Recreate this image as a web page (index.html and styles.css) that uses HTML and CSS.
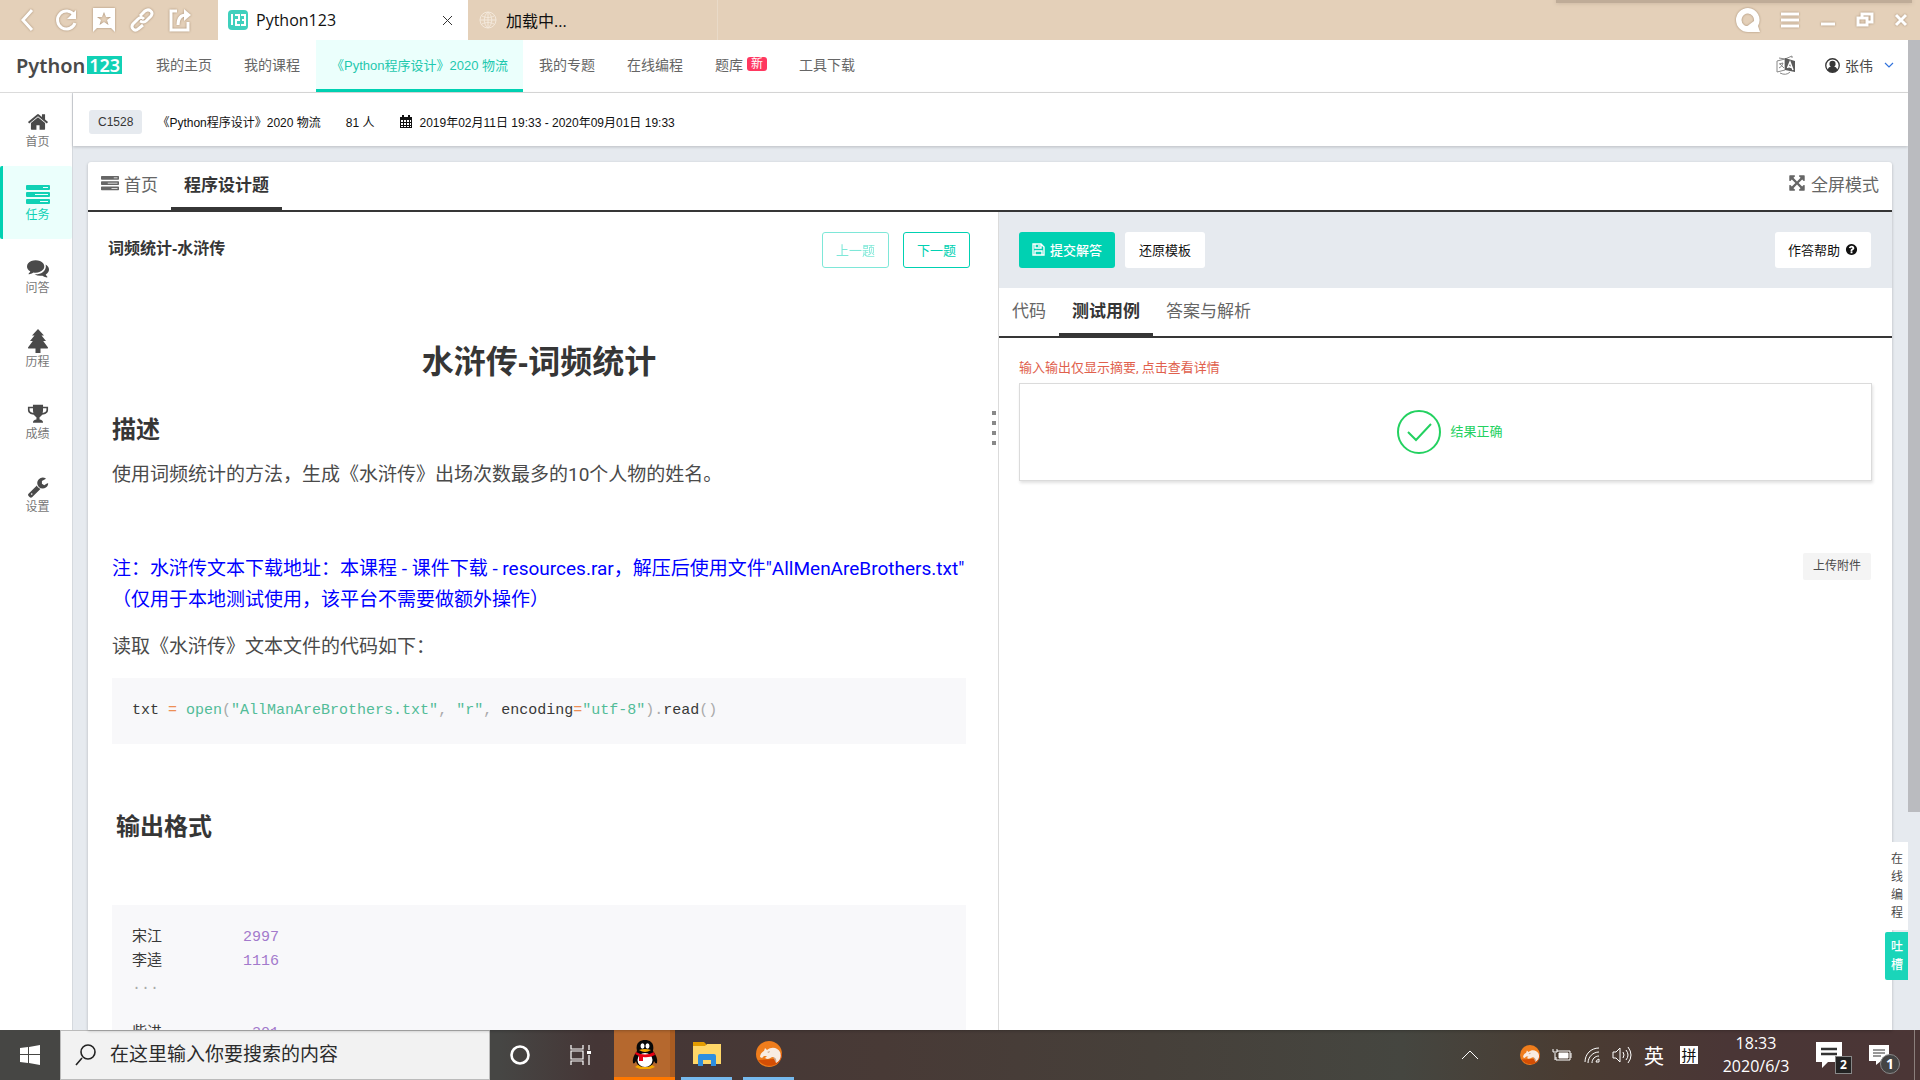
FILE: index.html
```
<!DOCTYPE html>
<html lang="zh-CN">
<head>
  <meta charset="UTF-8">
  <meta name="viewport" content="width=device-width, initial-scale=1.0">
  <title>Python123</title>
  <link rel="stylesheet" href="styles.css">
</head>
<body>
  <svg class="sprite" aria-hidden="true">
    <symbol id="home" viewBox="0 0 1792 1792"><path d="M1472 992v480q0 26-19 45t-45 19h-384v-384h-256v384h-384q-26 0-45-19t-19-45v-480q0-1 .5-3t.5-3l575-474 575 474q1 2 1 6zm223-69l-62 74q-8 9-21 11h-3q-13 0-21-7l-692-577-692 577q-12 8-24 7-13-2-21-11l-62-74q-8-10-7-23.5t11-21.5l719-599q32-26 76-26t76 26l244 204v-195q0-14 9-23t23-9h192q14 0 23 9t9 23v408l219 182q10 8 11 21.5t-7 23.5z"/></symbol>
    <symbol id="tasks" viewBox="0 0 24 20"><path fill-rule="evenodd" d="M1 0h22q1 0 1 1v3q0 1-1 1H1q-1 0-1-1V1q0-1 1-1zm16 2v1h5V2zM1 7h22q1 0 1 1v3q0 1-1 1H1q-1 0-1-1V8q0-1 1-1zm8 2v1h13V9zM1 14h22q1 0 1 1v3q0 1-1 1H1q-1 0-1-1v-3q0-1 1-1zm13 2v1h8v-1z"/></symbol>
    <symbol id="comments" viewBox="0 0 1792 1792"><path d="M1408 768q0 139-94 257t-256.5 186.5-353.5 68.5q-86 0-176-16-124 88-278 128-36 9-86 16h-3q-11 0-20.5-8t-11.5-21q-1-3-1-6.5t.5-6.5 2-6l2.5-5 3.5-5.5 4-5 4.5-5 4-4.5q5-6 23-25t26-29.5 22.5-29 25-38.5 20.5-44q-124-72-195-177t-71-224q0-139 94-257t256.5-186.5 353.5-68.5 353.5 68.5 256.5 186.5 94 257zm384 256q0 120-71 224.5t-195 176.5q10 24 20.5 44t25 38.5 22.5 29 26 29.5 23 25q1 1 4 4.5t4.5 5 4 5 3.5 5.5l2.5 5 2 6 .5 6.5-1 6.5q-3 14-13 22t-22 7q-50-7-86-16-154-40-278-128-90 16-176 16-271 0-472-132 58 4 88 4 161 0 309-45t264-129q125-92 192-212t67-254q0-77-23-152 129 71 204 178t75 230z"/></symbol>
    <symbol id="tree" viewBox="0 0 24 24"><path d="M12 0l6 6.500h-2.500l4.500 5.500h-2.800L22 18.500q.4 1-.8 1h-6.700V24h-5v-4.500H2.800q-1.200 0-.8-1L6.800 12H4l4.500-5.500H6z"/></symbol>
    <symbol id="trophy" viewBox="0 0 24 24"><path fill-rule="evenodd" d="M6.500 2h11v2H23v3.500c0 3-3 5-6.500 5.200-.8 1.400-2 2.200-2.800 2.800v2.500c2.300.2 3.800 1.200 3.800 3.500H6.500c0-2.300 1.500-3.300 3.800-3.500v-2.500c-.8-.6-2-1.400-2.800-2.800C4 12.500 1 10.500 1 7.500V4h5.500zm0 3.800H2.800v1.700c0 1.500 1.900 2.900 4.100 3.300-.4-1.300-.4-3-.4-5zm11 0c0 2 0 3.700-.4 5 2.200-.4 4.100-1.800 4.100-3.300V5.800z"/></symbol>
    <symbol id="wrench" viewBox="0 0 1792 1792"><path d="M448 1472q0-26-19-45t-45-19-45 19-19 45 19 45 45 19 45-19 19-45zm644-420l-682 682q-37 37-90 37-52 0-91-37l-106-108q-38-36-38-90 0-53 38-91l681-681q39 98 114.500 173.500t173.500 114.500zm634-435q0 39-23 106-47 134-164.500 217.500t-258.500 83.500q-185 0-316.500-131.500t-131.500-316.500 131.500-316.500 316.500-131.500q58 0 121.500 16.500t107.500 46.500q16 11 16 28t-16 28l-293 169v224l193 107q5-3 79-48.500t135.500-81 70.500-35.500q15 0 23.500 10t8.500 25z"/></symbol>
    <symbol id="expand" viewBox="0 0 1792 1792"><path d="M1411 541l-355 355 355 355 144-144q29-31 70-14 39 17 39 59v448q0 26-19 45t-45 19h-448q-42 0-59-40-17-39 14-69l144-144-355-355-355 355 144 144q31 30 14 69-17 40-59 40h-448q-26 0-45-19t-19-45v-448q0-42 40-59 39-17 69 14l144 144 355-355-355-355-144 144q-19 19-45 19-12 0-24-5-40-17-40-59v-448q0-26 19-45t45-19h448q42 0 59 40 17 39-14 69l-144 144 355 355 355-355-144-144q-31-30-14-69 17-40 59-40h448q26 0 45 19t19 45v448q0 42-39 59-13 5-25 5-26 0-45-19z"/></symbol>
    <symbol id="question" viewBox="0 0 1792 1792"><path d="M1024 1376v-192q0-14-9-23t-23-9h-192q-14 0-23 9t-9 23v192q0 14 9 23t23 9h192q14 0 23-9t9-23zm256-672q0-88-55.500-163t-138.500-116-170-41q-243 0-371 213-15 24 8 42l132 100q7 6 19 6 16 0 25-12 53-68 86-92 34-24 86-24 48 0 85.500 26t37.500 59q0 38-20 61t-68 45q-63 28-115.500 86.500t-52.500 125.500v36q0 14 9 23t23 9h192q14 0 23-9t9-23q0-19 21.500-49.500t54.500-49.500q32-18 49-28.500t46-35 44.500-48 28-60.500 12.500-81zm384 192q0 209-103 385.500t-279.500 279.500-385.500 103-385.500-103-279.500-279.500-103-385.500 103-385.500 279.500-279.500 385.500-103 385.500 103 279.500 279.500 103 385.500z"/></symbol>
    <symbol id="fox" viewBox="0 0 26 26"><circle cx="13" cy="13" r="13" fill="#ef7d1c"/><path d="M2 19c5 6 13 8 20 3 3-3 4-7 4-10l-8 6z" fill="#d34e05"/><path d="M4 16c0-3 2-5 4-6l1-3 2 2c5-4 11-2 13 2 2 5 0 9-4 11 0-3 0-5-3-6-2 0-3 2-6 2l-2-1 2-2-3 0-2 2z" fill="#f8ece2"/><path d="M11 11l3-1-1 2zM17 16c3 1 4 3 3 6" fill="#c9a58c"/></symbol>
  </svg>

  <!-- browser window bar -->
  <div class="browser">
    <div class="browser-tools">
      <button aria-label="后退"><svg width="24" height="26" viewBox="0 0 24 26"><path d="M16 3L7 13l9 10"/></svg></button>
      <button aria-label="刷新"><svg width="24" height="26" viewBox="0 0 24 26"><path d="M20 8a9 9 0 1 0 1 8"/><path class="fill" d="M22 3v9h-9z"/></svg></button>
      <button aria-label="收藏"><svg width="24" height="26" viewBox="0 0 24 26"><path class="fill" fill-rule="evenodd" d="M1 1h22v24l-4-4H5l-4 4zm11 4l-2 5H5l4 3-1.500 5 4.500-3 4.500 3-1.500-5 4-3h-5z"/></svg></button>
      <button aria-label="链接"><svg width="24" height="26" viewBox="0 0 24 26"><path d="M10 9l5-5c4-3 9 1 6 5l-5 5c-2 2-4 1-6 0M14 12c-2-2-4-2-6 0l-5 5c-3 4 2 8 5 5l5-4"/></svg></button>
      <button aria-label="分享"><svg width="24" height="26" viewBox="0 0 24 26"><path d="M9 4H3v19h17v-8M10 18c0-7 3-10 8-10"/><path class="fill" d="M16 2l7 6-7 6z"/></svg></button>
    </div>
    <div class="tab current">
      <svg width="20" height="20" viewBox="0 0 20 20"><rect width="20" height="20" rx="4" fill="#3fd0bd"/><path d="M4 5v10M3 5h2M7 5h4v5H8v5h4M13 5h4v5h-3m3 0v5h-4" fill="none" stroke="#fff" stroke-width="2"/></svg>
      <span>Python123</span>
      <button class="close" aria-label="关闭标签"><svg width="11" height="11" viewBox="0 0 11 11"><path d="M1 1l9 9M10 1l-9 9"/></svg></button>
    </div>
    <div class="tab loading">
      <svg width="18" height="18" viewBox="0 0 18 18"><path d="M1 9a8 8 0 1 0 16 0A8 8 0 1 0 1 9zM9 1v16M1 9h16M9 1c-5 4-5 12 0 16M9 1c5 4 5 12 0 16M3 5c4 2 8 2 12 0M3 13c4-2 8-2 12 0"/></svg>
      <span>加载中...</span>
    </div>
    <div class="window-tools">
      <button aria-label="搜索"><svg width="24" height="24" viewBox="0 0 24 24"><path class="fill" fill-rule="evenodd" d="M12 0a12 12 0 0 1 10 18l2 6H12A12 12 0 0 1 12 0zm0 5.500a6.500 6.500 0 0 0-4 11.500c2 2 4 1 6-1l4-3a6.500 6.500 0 0 0-6-7.500z"/></svg></button>
      <button aria-label="菜单"><svg width="20" height="16" viewBox="0 0 20 16"><path d="M1 2h18M1 8h18M1 14h18"/></svg></button>
      <button aria-label="最小化"><svg width="16" height="16" viewBox="0 0 16 16"><path d="M1 12h14"/></svg></button>
      <button aria-label="还原"><svg width="18" height="16" viewBox="0 0 18 16"><path d="M6 5V2h10v8h-4M2 6h9v7H2z"/></svg></button>
      <button aria-label="关闭"><svg width="14" height="14" viewBox="0 0 14 14"><path d="M2 2l10 10M12 2L2 12"/></svg></button>
    </div>
    <div class="peek"></div>
  </div>

  <div class="page">
    <div class="site">
      <header class="header">
        <a href="#" class="logo">Python<span>123</span></a>
        <nav class="nav">
          <a href="#">我的主页</a>
          <a href="#">我的课程</a>
          <a href="#" class="active">《Python程序设计》2020 物流</a>
          <a href="#">我的专题</a>
          <a href="#">在线编程</a>
          <a href="#">题库<span class="new">新</span></a>
          <a href="#">工具下载</a>
        </nav>
        <button class="lang" aria-label="语言"><svg width="20" height="20" viewBox="0 0 20 20"><path d="M9 4L1 6v11l8-2zM3 3l6 1 7-3v2M4 18q6 3 10-1M3 9l4-1q-1 4-4 5M4 9l4 4" fill="none" stroke="#888"/><path d="M9 3l10 3v11L9 15z" fill="#5a5a5a"/><path d="M11.500 13l2.500-6 3 8M12.500 11.500l3 1" fill="none" stroke="#fff" stroke-width="1.500"/></svg></button>
        <button class="user"><svg width="15" height="15" viewBox="0 0 16 16"><circle cx="8" cy="8" r="7.200" fill="none" stroke="#363636" stroke-width="1.400"/><circle cx="8" cy="6.300" r="3.300" fill="#363636"/><path d="M3 13c0-3 2-4 5-4s5 1 5 4c-3 2.500-7 2.500-10 0z" fill="#363636"/></svg>张伟<svg width="10" height="7" viewBox="0 0 10 7"><path d="M1 1l4 4 4-4" fill="none" stroke="#3273dc" stroke-width="1.200"/></svg></button>
      </header>

      <div class="layout">
        <nav class="sidebar">
          <a href="#"><svg width="22" height="22"><use href="#home"/></svg>首页</a>
          <a href="#" class="active"><svg width="24" height="22"><use href="#tasks"/></svg>任务</a>
          <a href="#"><svg width="24" height="22"><use href="#comments"/></svg>问答</a>
          <a href="#"><svg width="24" height="24"><use href="#tree"/></svg>历程</a>
          <a href="#"><svg width="24" height="22"><use href="#trophy"/></svg>成绩</a>
          <a href="#"><svg width="22" height="22"><use href="#wrench"/></svg>设置</a>
        </nav>

        <main class="main">
          <div class="course">
            <span class="code-tag">C1528</span>
            <span class="course-name">《Python程序设计》2020 物流</span>
            <span class="people">81 人</span>
            <svg width="12" height="13" viewBox="0 0 12 13"><path fill-rule="evenodd" d="M0 2h2V0h2v2h4V0h2v2h2v11H0zm1 3v2h2V5zm3 0v2h2V5zm3 0v2h2V5zm3 0v2h1V5zM1 8v2h2V8zm3 0v2h2V8zm3 0v2h2V8zm3 0v2h1V8zm-9 3v1h2v-1zm3 0v1h2v-1zm3 0v1h2v-1zm3 0v1h1v-1z"/></svg>
            <span>2019年02月11日 19:33 - 2020年09月01日 19:33</span>
          </div>

          <section class="card">
            <div class="tabs">
              <a href="#"><svg width="18" height="15"><use href="#tasks"/></svg>首页</a>
              <a href="#" class="active">程序设计题</a>
              <a href="#" class="full"><svg width="18" height="18"><use href="#expand"/></svg>全屏模式</a>
            </div>
            <div class="split">
              <div class="problem">
                <div class="problem-head">
                  <h4>词频统计-水浒传</h4>
                  <button class="outline" disabled>上一题</button>
                  <button class="outline">下一题</button>
                </div>
                <article class="content">
                  <h1>水浒传-词频统计</h1>
                  <h2>描述</h2>
                  <p>使用词频统计的方法，生成《水浒传》出场次数最多的10个人物的姓名。</p>
                  <p class="note">注：水浒传文本下载地址：本课程 - 课件下载 - resources.rar，解压后使用文件"AllMenAreBrothers.txt"<br>（仅用于本地测试使用，该平台不需要做额外操作）</p>
                  <p>读取《水浒传》文本文件的代码如下：</p>
                  <pre>txt <i class="op">=</i> <i class="str">open</i><i class="pun">(</i><i class="str">"AllManAreBrothers.txt"</i><i class="pun">,</i> <i class="str">"r"</i><i class="pun">,</i> encoding<i class="op">=</i><i class="str">"utf-8"</i><i class="pun">).</i>read<i class="pun">()</i></pre>
                  <h2 class="format">输出格式</h2>
                  <pre>宋江         <i class="num">2997</i>
李逵         <i class="num">1116</i>
<i class="pun">...</i>

柴进          <i class="num">301</i></pre>
                </article>
                <div class="handle"><i></i><i></i><i></i><i></i></div>
              </div>

              <div class="answer">
                <div class="answer-bar">
                  <button class="submit"><svg width="13" height="13" viewBox="0 0 13 13"><path d="M1 1h8l3 3v8H1zM3 1v4h6V1M3 12V8h7v4M7 2v2" fill="none" stroke="#fff" stroke-width="1.400"/></svg>提交解答</button>
                  <button>还原模板</button>
                  <button class="help">作答帮助<svg width="13" height="13"><use href="#question"/></svg></button>
                </div>
                <div class="tabs sub">
                  <a href="#">代码</a>
                  <a href="#" class="active">测试用例</a>
                  <a href="#">答案与解析</a>
                </div>
                <div class="cases">
                  <p class="tip">输入输出仅显示摘要, 点击查看详情</p>
                  <div class="result">
                    <svg width="44" height="44" viewBox="0 0 44 44"><circle cx="22" cy="22" r="21"/><path d="M11 22l8 8 15-16"/></svg>
                    <span>结果正确</span>
                  </div>
                  <button class="upload">上传附件</button>
                </div>
              </div>
            </div>
          </section>
        </main>
      </div>
    </div>
    <div class="scrollbar"><div class="thumb"></div></div>
    <div class="float">
      <a href="#">在线编程</a>
      <a href="#" class="feedback">吐槽</a>
    </div>
  </div>

  <!-- taskbar -->
  <footer class="taskbar">
    <button class="start" aria-label="开始"><svg width="20" height="20" viewBox="0 0 20 20"><path d="M0 3l8-1v7H0zM9 2l11-2v9H9zM0 10h8v8l-8-1zM9 10h11v10L9 18z" fill="#fff"/></svg></button>
    <label class="search">
      <svg width="22" height="22" viewBox="0 0 22 22"><path d="M7 14L1 21M6 8a7 7 0 1 0 14 0A7 7 0 1 0 6 8z" fill="none" stroke="#222" stroke-width="1.600"/></svg>
      <input type="text" placeholder="在这里输入你要搜索的内容" aria-label="搜索">
    </label>
    <button class="app" aria-label="Cortana"><svg width="20" height="20" viewBox="0 0 20 20"><circle cx="10" cy="10" r="8.500" fill="none" stroke="#fff" stroke-width="2.600"/></svg></button>
    <button class="app" aria-label="任务视图"><svg width="21" height="20" viewBox="0 0 21 20"><path d="M1 0v4h12V0M1 20v-4h12v4M1 6h12v8H1zM19 0v5M19 10v10" fill="none" stroke="#fff" stroke-width="1.200"/><path d="M17 6h4v3h-4z" fill="#fff"/></svg></button>
    <button class="app qq" aria-label="QQ"><svg width="26" height="30" viewBox="0 0 26 30"><path d="M6 26h14l3 2-5 2H8l-5-2z" fill="#f5a800"/><path d="M5 12C3 3 9 1 13 1s10 2 8 11c3 4 5 8 4 12-1 1-2 0-3-2-1 4-4 6-9 6s-8-2-9-6c-1 2-2 3-3 2-1-4 1-8 4-12z" fill="#080808"/><ellipse cx="13" cy="21" rx="7.500" ry="7" fill="#fff"/><ellipse cx="10.500" cy="7" rx="2" ry="2.700" fill="#fff"/><ellipse cx="15.500" cy="7" rx="2" ry="2.700" fill="#fff"/><circle cx="11" cy="7" r="1"/><circle cx="15" cy="7" r="1"/><path d="M7 11q6-2 12 0-6 4-12 0z" fill="#f5a800"/><path d="M4 13q9 5 18 0l1 3q-6 3-12 2v4H7v-5l-4-2z" fill="#e60012"/></svg></button>
    <button class="app running" aria-label="文件资源管理器"><svg width="28" height="24" viewBox="0 0 28 24"><path d="M0 0h11l2 2v4H0z" fill="#e39c00"/><path d="M0 4h12l2-2h14v20H0z" fill="#ffd768"/><path d="M5 14q0-2 2-2h14q2 0 2 2v10h-5v-6h-8v6H5z" fill="#2f8fdf"/></svg></button>
    <button class="app running" aria-label="浏览器"><svg width="26" height="26"><use href="#fox"/></svg></button>

    <div class="tray">
      <button aria-label="显示隐藏的图标"><svg width="18" height="10" viewBox="0 0 18 10"><path d="M1 9l8-8 8 8"/></svg></button>
      <button class="first" aria-label="浏览器"><svg width="20" height="20"><use href="#fox"/></svg></button>
      <button aria-label="电池"><svg width="20" height="14" viewBox="0 0 20 14"><path d="M5 3h13v9H4V9M3 8V5M1 1v3h4V1M3 8v4M19 5v5"/><path d="M7 5h9v5H7z" fill="#fff"/></svg></button>
      <button aria-label="网络"><svg width="16" height="16" viewBox="0 0 16 16"><path d="M1 15C1 7 7 1 15 1M4 16C4 10 9 5 15 5M8 16c0-4 3-7 7-7M12 15q0-2 3-3v3z"/></svg></button>
      <button aria-label="音量"><svg width="20" height="18" viewBox="0 0 20 18"><path d="M1 6h3l4-4v14l-4-4H1zM11 6q2 3 0 6M14 4q4 5 0 10M16 1q6 8 0 16"/></svg></button>
      <button class="ime">英</button>
      <button class="pinyin">拼</button>
      <div class="clock"><span>18:33</span><span>2020/6/3</span></div>
      <button class="notice" aria-label="消息"><svg width="28" height="28" viewBox="0 0 28 28"><path d="M1 1h26v20H13l-6 6v-6H1z" fill="#fff" stroke="none"/><path d="M6 8h16M6 13h16" stroke="#333" stroke-width="2.400"/></svg><b>2</b></button>
      <button class="notice" aria-label="通知"><svg width="20" height="20" viewBox="0 0 20 20"><path d="M0 0h20v16h-8l-5 4v-4H0z" fill="#fff" stroke="none"/><path d="M4 5h12M4 8h12M4 11h8" stroke="#333"/></svg><b class="round">1</b></button>
    </div>
  </footer>
</body>
</html>
```
FILE: styles.css
```
*{
  box-sizing: border-box;
}
body{
  margin: 0;
  height: 100vh;
  display: flex;
  flex-direction: column;
  overflow: hidden;
  font-family: "Liberation Sans", "Noto Sans CJK SC", sans-serif;
  font-size: 14px;
  color: #4a4a4a;
}
a{
  color: inherit;
  text-decoration: none;
}
button{
  border: none;
  padding: 0;
  background: none;
  font-family: inherit;
  color: inherit;
  cursor: pointer;
}
svg{
  display: block;
  flex: none;
  fill: currentColor;
}
.sprite{
  position: absolute;
  width: 0;
  height: 0;
}

/* browser bar */
.browser{
  position: relative;
  flex: none;
  display: flex;
  height: 40px;
  background-color: #e4d0b9;
  font-family: "Open Sans", "Noto Sans CJK SC", sans-serif;
  font-size: 16px;
  color: #111;
}
.browser-tools{
  display: flex;
  align-items: center;
  gap: 14px;
  width: 218px;
  padding-left: 16px;
}
.browser-tools svg,
.window-tools svg{
  fill: none;
  stroke: #fff;
  stroke-width: 3;
  filter: drop-shadow(0 0 1px #a58c72);
}
.browser .fill{
  fill: #fff;
  stroke: none;
}
.tab{
  display: flex;
  align-items: center;
  gap: 8px;
  width: 250px;
  padding: 0 15px 0 10px;
}
.tab.current{
  background-color: #fff;
}
.tab .close{
  margin-left: auto;
}
.tab .close svg{
  fill: none;
  stroke: #333;
}
.tab.loading{
  gap: 9px;
  padding-left: 11px;
  border-right: 1px solid #e9dac8;
}
.tab.loading svg{
  fill: none;
  stroke: #f4e9dc;
}
.window-tools{
  display: flex;
  align-items: center;
  gap: 20px;
  margin-left: auto;
  padding-right: 12px;
}
.peek{
  position: absolute;
  top: 0;
  right: 8px;
  width: 356px;
  height: 3px;
  background-color: #bfac98;
  box-shadow: 0 0 4px #bfac98;
}

/* page */
.page{
  position: relative;
  flex: 1;
  min-height: 0;
  display: flex;
  background-color: #e6eaef;
}
.site{
  flex: 1;
  min-width: 0;
  display: flex;
  flex-direction: column;
}
.scrollbar{
  flex: none;
  width: 12px;
}
.thumb{
  height: 78%;
  background-color: #babbbf;
}
.header{
  flex: none;
  display: flex;
  align-items: center;
  height: 53px;
  padding-bottom: 2px;
  background-color: #fff;
  border-bottom: 1px solid #dbdbdb;
}
.logo{
  display: flex;
  align-items: center;
  gap: 2px;
  width: 140px;
  padding-left: 16px;
  font-family: "Noto Sans", sans-serif;
  font-size: 20px;
  font-weight: 600;
}
.logo span{
  padding: 0 2px;
  line-height: 18px;
  font-size: 18px;
  color: #fff;
  background-color: #11d1b5;
}
.nav{
  display: flex;
  align-self: stretch;
  margin-bottom: -2px;
}
.nav a{
  display: flex;
  align-items: center;
  padding: 0 16px 4px;
  color: #666;
  white-space: nowrap;
}
.nav .active{
  padding: 0 15px;
  font-size: 13px;
  color: #1fc8ae;
  background-color: #ebfffc;
  border-bottom: 3px solid #00d1b2;
}
.new{
  margin-left: 4px;
  padding: 0 4px;
  border-radius: 3px;
  background-color: #ff3860;
  color: #fff;
  font-size: 12px;
  line-height: 14px;
}
.lang{
  margin-left: auto;
}
.user{
  display: flex;
  align-items: center;
  gap: 5px;
  margin: 0 14px 0 29px;
  font-size: 14px;
}
.user svg:last-child{
  margin-left: 6px;
}
.layout{
  flex: 1;
  min-height: 0;
  display: flex;
}
.sidebar{
  flex: none;
  width: 73px;
  background-color: #fff;
  border-right: 1px solid #d5d9de;
}
.sidebar a{
  display: flex;
  flex-direction: column;
  align-items: center;
  justify-content: center;
  height: 73px;
  padding-top: 2px;
  border-left: 3px solid transparent;
  font-size: 12px;
  line-height: 18px;
  color: #777;
}
.sidebar svg{
  color: #4a4a4a;
}
.sidebar .active,
.sidebar .active svg{
  color: #11d1b5;
}
.sidebar .active{
  background-color: #ebfffc;
  border-left-color: #00d1b2;
  border-radius: 2px;
}
.main{
  flex: 1;
  min-width: 0;
  display: flex;
  flex-direction: column;
}
.course{
  flex: none;
  display: flex;
  align-items: center;
  height: 53px;
  padding: 4px 0 0 16px;
  background-color: #fff;
  box-shadow: 0 1px 3px rgba(10, 10, 10, 0.2);
  font-size: 12px;
  color: #111;
}
.code-tag{
  padding: 0 9px;
  border-radius: 3px;
  background-color: #e6eaef;
  line-height: 24px;
  color: #363636;
}
.course-name{
  margin: 0 25px 0 15px;
}
.people{
  margin-right: 26px;
}
.course svg{
  margin-right: 7px;
}

/* card */
.card{
  flex: 1;
  min-height: 0;
  display: flex;
  flex-direction: column;
  margin: 16px 16px 0 15px;
  background-color: #fff;
  border-radius: 3px 3px 0 0;
  box-shadow: 0 1px 3px rgba(10, 10, 10, 0.25);
}
.tabs{
  flex: none;
  display: flex;
  height: 50px;
  border-bottom: 2px solid #363636;
  font-size: 17px;
  color: #666;
}
.tabs a{
  display: flex;
  align-items: center;
  gap: 5px;
  margin-bottom: -2px;
  padding: 0 13px 8px;
}
.tabs .active{
  padding-bottom: 3px;
  border-bottom: 5px solid #363636;
  font-weight: bold;
  color: #363636;
}
.tabs .full{
  margin-left: auto;
}
.split{
  flex: 1;
  min-height: 0;
  display: grid;
  grid-template-columns: 101fr 99fr;
  grid-template-rows: 100%;
}
.problem{
  position: relative;
  min-width: 0;
  padding: 20px 28px 0 20px;
  overflow: hidden;
  border-right: 1px solid #dbdbdb;
}
.problem-head{
  display: flex;
  gap: 14px;
}
h4{
  flex: 1;
  margin: 0;
  font-size: 16px;
  line-height: 34px;
  color: #363636;
}
.outline{
  width: 67px;
  height: 36px;
  padding-bottom: 2px;
  border: 1px solid #00d1b2;
  border-radius: 3px;
  font-size: 13px;
  color: #00d1b2;
}
.outline:disabled{
  opacity: 0.5;
}
.content{
  padding: 0 4px;
}
h1{
  margin: 74px 0 0;
  text-align: center;
  font-size: 32px;
  line-height: 40px;
  color: #363636;
}
h2{
  margin: 33px 0 14px;
  font-size: 24px;
  line-height: 30px;
  color: #363636;
}
p{
  margin: 0 0 16px;
  font-family: Roboto, "Noto Sans CJK SC", sans-serif;
  font-size: 19px;
  line-height: 31px;
}
.content .note{
  margin-top: 63px;
  color: #00f;
  white-space: nowrap;
}
pre{
  margin: 0;
  padding: 21px 20px;
  overflow: hidden;
  background-color: #f8f8fa;
  font-family: "Liberation Mono", "Noto Sans CJK SC", monospace;
  font-size: 15px;
  line-height: 24px;
  color: #383838;
}
pre i{
  font-style: normal;
}
.op{
  color: #ed8f56;
}
.str{
  color: #52bc98;
}
.pun{
  color: #aaa;
}
.num{
  color: #a37acc;
}
.format{
  margin: 68px 4px 63px;
}
.handle{
  position: absolute;
  top: 199px;
  right: 2px;
  display: flex;
  flex-direction: column;
  gap: 6px;
}
.handle i{
  width: 4px;
  height: 4px;
  background-color: #888;
}
.answer{
  min-width: 0;
}
.answer-bar{
  display: flex;
  gap: 10px;
  height: 76px;
  padding: 20px 21px 20px 20px;
  background-color: #e6eaef;
}
.answer-bar button{
  display: flex;
  align-items: center;
  gap: 5px;
  padding: 0 14px 2px;
  border-radius: 3px;
  background-color: #fff;
  font-size: 13px;
  color: #111;
}
.answer-bar .submit{
  padding: 0 13px 2px;
  background-color: #00d1b2;
  color: #fff;
  font-weight: 500;
}
.answer-bar .help{
  margin-left: auto;
  padding: 0 13px 2px;
}
.cases{
  padding: 20px 20px 0;
}
.cases .tip{
  margin: 0 0 5px;
  font-size: 13px;
  line-height: 20px;
  color: #e0604c;
}
.result{
  display: flex;
  align-items: center;
  justify-content: center;
  gap: 10px;
  height: 98px;
  padding-left: 8px;
  border: 1px solid #dbdbdb;
  box-shadow: 1px 2px 3px rgba(10, 10, 10, 0.12);
  font-size: 13px;
  color: #23d160;
}
.result span{
  padding-bottom: 3px;
}
.result svg{
  fill: none;
  stroke: #23d160;
  stroke-width: 2;
}
.upload{
  display: block;
  margin: 72px 1px 0 auto;
  padding: 0 10px;
  border-radius: 2px;
  background-color: #f4f4f4;
  font-size: 12px;
  line-height: 27px;
}

/* floating links at the right edge */
.float{
  position: absolute;
  right: 12px;
  bottom: 50px;
  display: flex;
  flex-direction: column;
  gap: 2px;
  width: 23px;
}
.float a{
  padding: 8px 5px 8px 6px;
  border-radius: 2px 0 0 2px;
  background-color: #fff;
  font-size: 12px;
  line-height: 18px;
}
.float .feedback{
  padding: 6px 5px 6px 6px;
  background-color: #1ad5b9;
  color: #fff;
  font-weight: 500;
}

/* taskbar */
.taskbar{
  flex: none;
  display: flex;
  align-items: center;
  height: 50px;
  background: linear-gradient(90deg, #464644 0%, #464644 26%, #453636 31%, #483a36 46%, #46403a 60%, #454640 73%, #4a3c32 82%, #4a3636 90%, #4b3636 100%);
  color: #fff;
}
.taskbar button{
  display: flex;
  align-items: center;
  justify-content: center;
}
.start{
  width: 60px;
}
.search{
  display: flex;
  align-items: center;
  gap: 13px;
  width: 430px;
  height: 50px;
  padding-left: 14px;
  border: 1px solid #bbb;
  background-color: #f2f2f2;
}
.search input{
  flex: 1;
  min-width: 0;
  padding: 0;
  border: none;
  outline: none;
  background: none;
  font-family: inherit;
  font-size: 19px;
}
.search input::placeholder{
  color: #2b2b2b;
}
.app{
  width: 60px;
  height: 50px;
}
.app.qq{
  width: 61px;
  margin-left: 4px;
  background-color: #b5682e;
  border-bottom: 3px solid #ff7800;
  box-shadow: inset -5px 0 #a85c22;
}
.app.running{
  width: 51px;
  margin-left: 6px;
  border-bottom: 3px solid #76b9ed;
}
.app.running + .running{
  margin-left: 11px;
}
.tray{
  display: flex;
  align-items: center;
  gap: 12px;
  height: 50px;
  margin-left: auto;
  margin-right: 5px;
  padding-right: 16px;
  border-right: 1px solid #8b7f7c;
  font-family: "Open Sans", "Noto Sans CJK SC", sans-serif;
}
.tray svg{
  fill: none;
  stroke: #fff;
  stroke-width: 1;
}
.tray .first{
  margin-left: 29px;
}
.tray .first svg{
  stroke: none;
}
.ime{
  font-size: 20px;
}
.tray .pinyin{
  margin-left: 4px;
  width: 18px;
  height: 18px;
  background-color: #fff;
  color: #111;
  font-size: 15px;
  line-height: 18px;
}
.clock{
  display: flex;
  flex-direction: column;
  align-items: center;
  width: 88px;
  padding-left: 4px;
  font-size: 16px;
  line-height: 23px;
}
.notice{
  position: relative;
  width: 38px;
}
.notice b{
  position: absolute;
  right: -4px;
  bottom: -5px;
  width: 17px;
  border: 1px solid #888;
  background-color: #222;
  font-size: 12px;
  line-height: 16px;
}
.notice .round{
  right: -2px;
  bottom: -9px;
  width: 20px;
  border-radius: 10px;
  background-color: #444;
  font-size: 14px;
  line-height: 18px;
}
```
